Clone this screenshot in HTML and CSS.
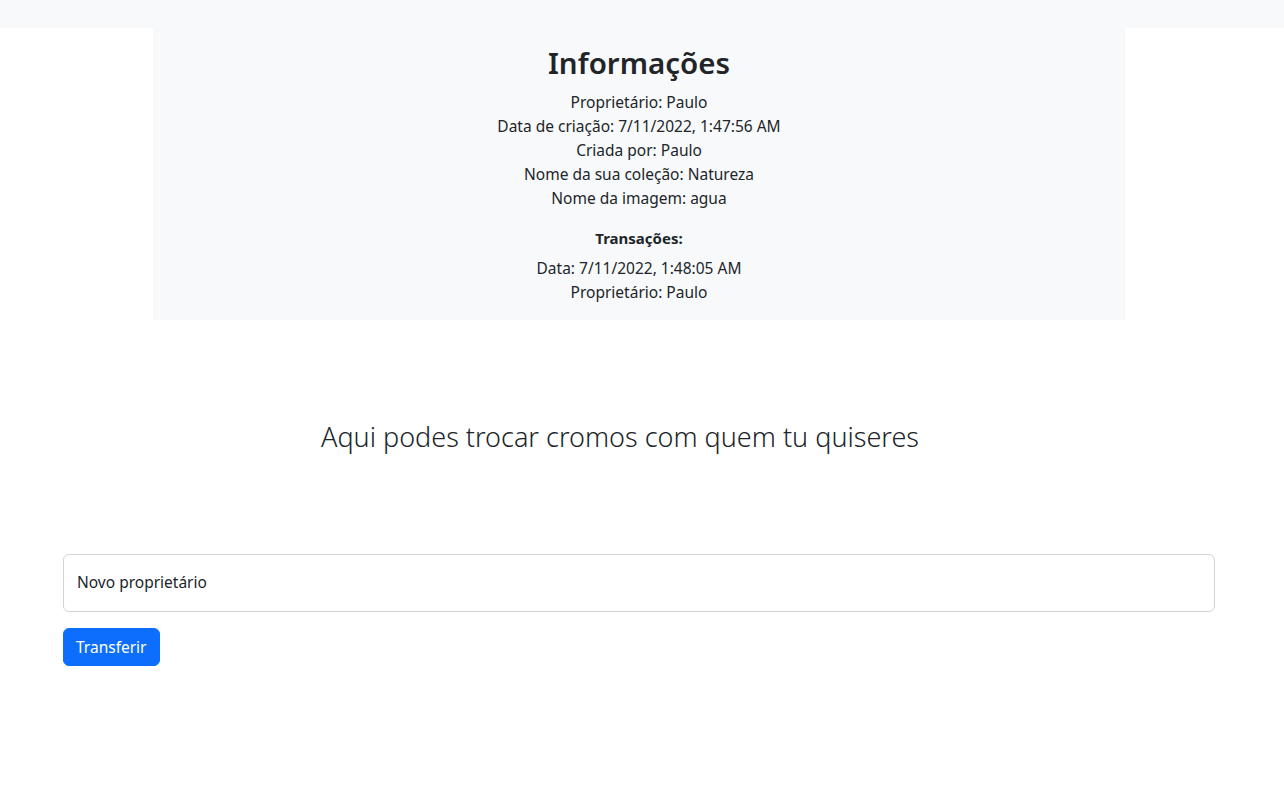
FILE: index.html
```html
<!DOCTYPE html>
<html lang="pt">
<head>
<meta charset="utf-8">
<title>Informações</title>
<link rel="stylesheet" href="styles.css">
</head>
<body>
<div class="page">
  <div class="topbar"></div>
  <section class="info">
    <h2 class="info-title">Informações</h2>
    <div class="info-lines">
      <p>Proprietário: Paulo</p>
      <p>Data de criação: 7/11/2022, 1:47:56 AM</p>
      <p>Criada por: Paulo</p>
      <p>Nome da sua coleção: Natureza</p>
      <p>Nome da imagem: agua</p>
    </div>
    <h6 class="tx-title">Transações:</h6>
    <div class="info-lines">
      <p>Data: 7/11/2022, 1:48:05 AM</p>
      <p>Proprietário: Paulo</p>
    </div>
  </section>
  <section class="trade">
    <h3 class="trade-title">Aqui podes trocar cromos com quem tu quiseres</h3>
    <form class="trade-form">
      <div class="floating">
        <input class="field" type="text" id="owner" placeholder=" ">
        <label class="field-label" for="owner">Novo proprietário</label>
      </div>
      <button type="button" class="btn">Transferir</button>
    </form>
  </section>
</div>
</body>
</html>
```
FILE: styles.css
```css
* { box-sizing: border-box; }
html { background: #fff; }
body {
  margin: 0;
  font-family: "Noto Sans", "Open Sans", sans-serif;
  font-size: 16px;
  line-height: 24px;
  color: #212529;
  background: #fff;
}
.page {
  width: 1278px;
}
.topbar {
  height: 28px;
  background: #f8f9fa;
  margin-right: -6px;
}
.info {
  width: 972px;
  margin: 0 auto;
  background: #f8f9fa;
  text-align: center;
  padding: 16px 0 16px;
}
.info-title {
  margin: 0 0 8px;
  font-size: 29.5px;
  line-height: 38px;
  font-weight: 600;
}
.info-lines p {
  margin: 0;
  font-size: 15.5px;
}
.tx-title {
  margin: 16px 0 6px;
  font-size: 15px;
  line-height: 24px;
  font-weight: 700;
}
.trade {
  padding: 0 63px;
}
.trade-title {
  margin: 100px 0 0;
  padding-right: 38px;
  text-align: center;
  font-size: 27px;
  line-height: 34px;
  font-weight: 300;
}
.trade-form {
  margin-top: 100px;
}
.floating {
  position: relative;
}
.field {
  display: block;
  width: 100%;
  height: 58px;
  border: 1px solid #ced4da;
  border-radius: 6px;
  padding: 16px 12px;
  font: inherit;
  background: #fff;
}
.field-label {
  position: absolute;
  left: 14px;
  top: 16px;
  font-size: 15.5px;
  color: #212529;
  pointer-events: none;
}
.btn {
  display: block;
  margin-top: 16px;
  height: 38px;
  padding: 0 12px;
  border: 1px solid #0d6efd;
  border-radius: 6px;
  background: #0d6efd;
  color: #fff;
  font: inherit;
  font-size: 15.5px;
}
```
